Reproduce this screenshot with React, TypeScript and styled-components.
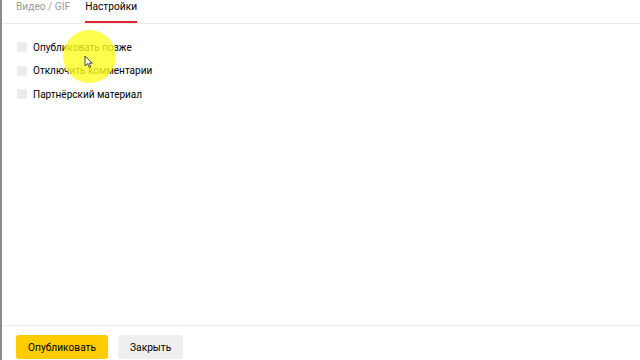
import styled, { createGlobalStyle } from 'styled-components';

const GlobalStyle = createGlobalStyle`
  html, body {
    margin: 0;
    padding: 0;
    background: #fff;
  }
  body {
    font-family: Roboto, "Liberation Sans", Arial, sans-serif;
    color: #000;
  }
`

const Page = styled.div`
  position: relative;
  width: 640px;
  height: 360px;
  display: flex;
  flex-direction: column;
  box-sizing: border-box;
  border-left: 2px solid #8a8a8a;
  overflow: hidden;
`
const Tabs = styled.div`
  display: flex;
  gap: 15px;
  padding: 0 14px;
  height: 23px;
  border-bottom: 1px solid #ebebeb;
`
const Tab = styled.div<{ $active?: boolean }>`
  font-size: 10.2px;
  line-height: 14px;
  color: ${p => (p.$active ? '#000' : '#9a9a9a')};
  box-shadow: ${p => (p.$active ? 'inset 0 -2px 0 #e0242f' : 'none')};
  height: 23px;
  box-sizing: border-box;
`
const Settings = styled.div`
  flex: 1;
  display: flex;
  flex-direction: column;
  gap: 7.5px;
  padding: 15px 15px 0;
`
const Option = styled.label`
  display: flex;
  align-items: center;
  gap: 6px;
  height: 16px;
  font-size: 10px;
  color: #000;
`
const Box = styled.span`
  width: 10px;
  height: 10px;
  background: #ececec;
  border-radius: 1px;
`
const Footer = styled.div`
  display: flex;
  gap: 10px;
  padding: 9px 14px 0;
  height: 35px;
  box-sizing: border-box;
  border-top: 1px solid #ebebeb;
`
const Button = styled.button<{ $primary?: boolean }>`
  height: 24px;
  padding: 0 12px;
  border: none;
  border-radius: 3px;
  font-family: Roboto, "Liberation Sans", Arial, sans-serif;
  font-size: 10.2px;
  color: #000;
  background: ${p => (p.$primary ? '#ffcc00' : '#efefef')};
`
const Highlight = styled.div`
  position: absolute;
  left: 61px;
  top: 30px;
  width: 53px;
  height: 53px;
  border-radius: 50%;
  background: rgba(255, 255, 30, 0.78);
  pointer-events: none;
`
const Cursor = styled.svg`
  position: absolute;
  left: 82px;
  top: 55px;
`

export default function App() {
  return (
    <Page>
      <GlobalStyle />
      <Tabs>
        <Tab>Видео / GIF</Tab>
        <Tab $active>Настройки</Tab>
      </Tabs>
      <Settings>
        <Option><Box />Опубликовать позже</Option>
        <Option><Box />Отключить комментарии</Option>
        <Option><Box />Партнёрский материал</Option>
      </Settings>
      <Footer>
        <Button $primary>Опубликовать</Button>
        <Button>Закрыть</Button>
      </Footer>
      <Highlight />
      <Cursor width="10" height="14" viewBox="0 0 10 14">
        <path d="M1 1 L1 11 L3.5 8.6 L5.3 12.6 L6.8 12 L5 8.2 L8.4 8.2 Z" fill="#fff" stroke="#333" strokeWidth="0.9" strokeLinejoin="round" />
      </Cursor>
    </Page>
  )
}
